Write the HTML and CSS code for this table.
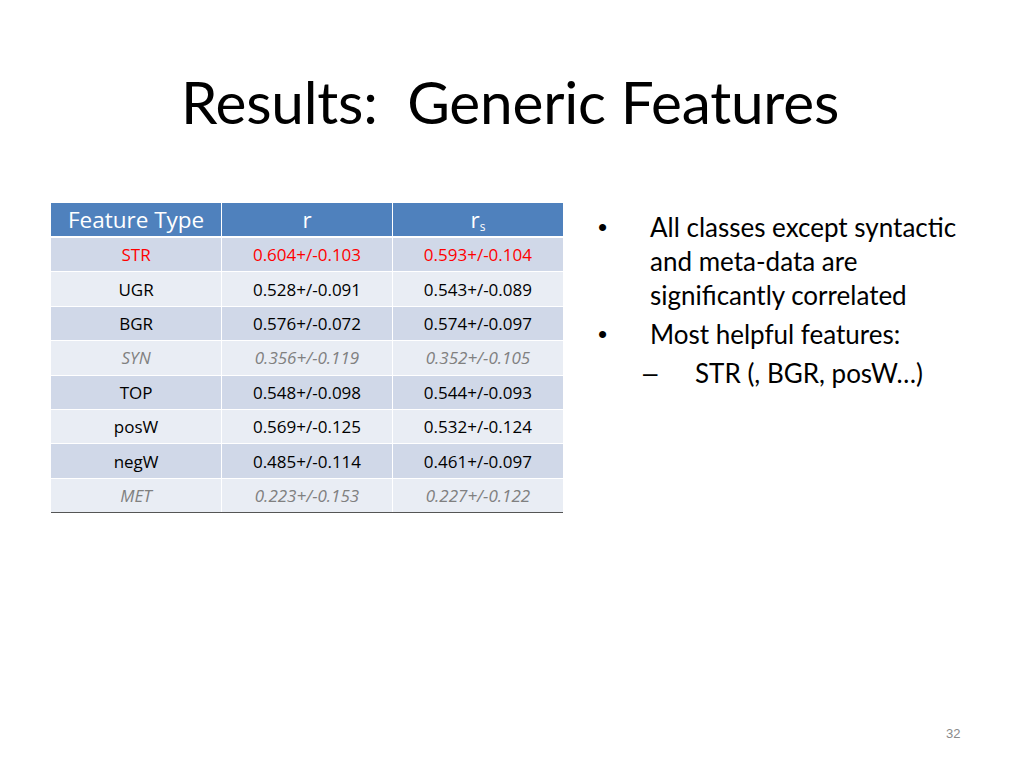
FILE: index.html
```html
<!DOCTYPE html>
<html>
<head>
<meta charset="utf-8">
<link rel="stylesheet" href="styles.css">
</head>
<body>
<div class="slide">
  <h1 class="title">Results:&nbsp; Generic Features</h1>
  <div class="content">
    <table class="results">
      <thead>
        <tr><th>Feature Type</th><th>r</th><th>r<sub>s</sub></th></tr>
      </thead>
      <tbody>
        <tr class="dark red"><td>STR</td><td>0.604+/-0.103</td><td>0.593+/-0.104</td></tr>
        <tr class="light"><td>UGR</td><td>0.528+/-0.091</td><td>0.543+/-0.089</td></tr>
        <tr class="dark"><td>BGR</td><td>0.576+/-0.072</td><td>0.574+/-0.097</td></tr>
        <tr class="light muted"><td>SYN</td><td>0.356+/-0.119</td><td>0.352+/-0.105</td></tr>
        <tr class="dark"><td>TOP</td><td>0.548+/-0.098</td><td>0.544+/-0.093</td></tr>
        <tr class="light"><td>posW</td><td>0.569+/-0.125</td><td>0.532+/-0.124</td></tr>
        <tr class="dark"><td>negW</td><td>0.485+/-0.114</td><td>0.461+/-0.097</td></tr>
        <tr class="light muted last"><td>MET</td><td>0.223+/-0.153</td><td>0.227+/-0.122</td></tr>
      </tbody>
    </table>
    <ul class="bullets">
      <li><span class="mark">•</span><span class="txt">All classes except syntactic and meta-data are significantly correlated</span></li>
      <li><span class="mark">•</span><span class="txt">Most helpful features:</span></li>
      <li class="sub"><span class="mark">–</span><span class="txt">STR (, BGR, posW…)</span></li>
    </ul>
  </div>
  <div class="pagenum">32</div>
</div>
</body>
</html>
```
FILE: styles.css
```css
html, body {
  margin: 0;
  padding: 0;
  background: #ffffff;
}
.slide {
  width: 1024px;
  height: 768px;
  position: relative;
  font-family: "Lato", "Carlito", sans-serif;
  color: #000;
}
.title {
  margin: 0;
  padding-top: 66px;
  padding-right: 4px;
  height: 70px;
  text-align: center;
  font-weight: normal;
  font-size: 58.5px;
  line-height: 70px;
  letter-spacing: -0.2px;
}
.content {
  display: flex;
  padding-top: 67px;
  padding-left: 51px;
}
.results {
  border-collapse: collapse;
  font-family: "Open Sans", "Noto Sans", sans-serif;
  width: 512px;
  flex: none;
  table-layout: fixed;
}
.results th, .results td {
  text-align: center;
  padding: 0;
  border: 1px solid #ffffff;
}
.results th {
  background: #4f81bd;
  color: #fff;
  font-weight: normal;
  font-size: 22.5px;
  height: 33px;
  border-bottom: 2px solid #fff;
  border-top: none;
}
.results th:first-child, .results td:first-child { border-left: none; }
.results th:last-child, .results td:last-child { border-right: none; }
.results th sub {
  font-size: 12px;
  vertical-align: -3px;
}
.results td {
  font-size: 17px;
  height: 33.4px;
}
.dark td { background: #d0d8e8; }
.light td { background: #e9edf4; }
.red td { color: #ff0000; }
.muted td { color: #808080; font-style: italic; }
.last td { border-bottom: 1px solid #555; }
.bullets {
  list-style: none;
  margin: 0;
  padding: 0 0 0 30px;
  font-size: 26px;
  line-height: 34px;
  width: 380px;
}
.bullets li {
  display: flex;
}
.bullets li:first-child { margin-top: 7px; }
.bullets li + li { margin-top: 5px; }
.bullets .mark {
  width: 57px;
  flex: none;
  padding-left: 5px;
  box-sizing: border-box;
  font-family: "Liberation Sans", sans-serif;
}
.bullets .txt { flex: 1; }
.bullets li.sub .mark {
  width: 102px;
  padding-left: 50px;
}
.pagenum {
  position: absolute;
  left: 946px;
  top: 726px;
  font-family: "Liberation Sans", sans-serif;
  font-size: 13px;
  color: #8a8a8a;
}
```
